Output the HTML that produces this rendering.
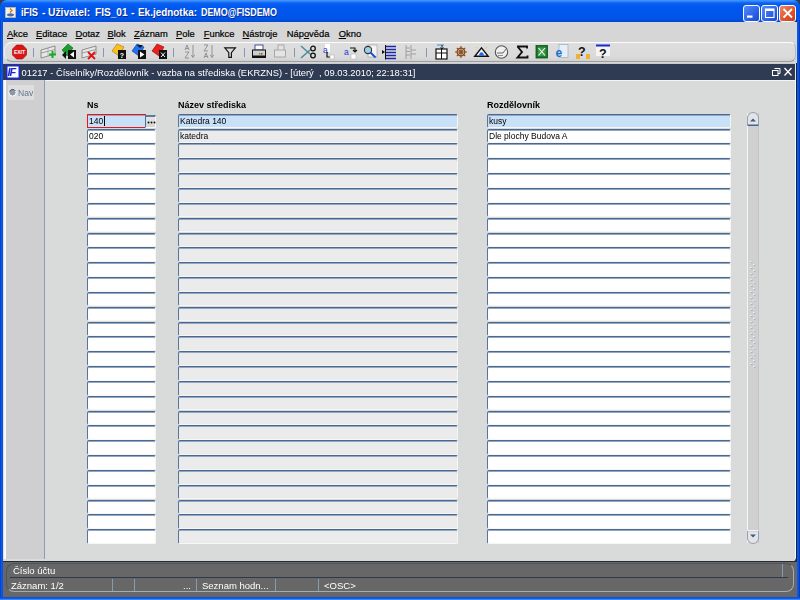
<!DOCTYPE html>
<html><head><meta charset="utf-8">
<style>
*{box-sizing:border-box;margin:0;padding:0}
html,body{width:800px;height:600px;overflow:hidden;background:#2a4058;font-family:"Liberation Sans",sans-serif}
.a{position:absolute}
#title{left:0;top:0;width:800px;height:23px;border-radius:7px 7px 0 0;background:linear-gradient(#4a9cff 0px,#2a80ff 1.5px,#0a62f4 3px,#0058ee 6px,#0056ec 14px,#0054e6 19px,#0048d4 22px,#0040c0 23px)}
.tt{top:6.3px;color:#fff;font-weight:bold;font-size:11.2px;transform-origin:0 0;text-shadow:1px 1px 0 #0a2a8a;white-space:nowrap}
.tb{top:5px;width:17px;height:17px;border:1px solid #fff;border-radius:3px}
#frameL{left:0;top:20px;width:3px;height:580px;background:linear-gradient(90deg,#0038c0,#0a5ae8 1.5px,#0850e0)}
#frameR{left:796px;top:20px;width:4px;height:580px;background:linear-gradient(90deg,#1c2438 0,#1c2438 0.9px,#0a5af0 1.2px,#0a58ec 2.2px,#0030a8 4px)}
#frameB{left:0;top:597px;width:800px;height:3px;background:linear-gradient(#0a50e4,#0a50e4 1.2px,#3a88f0 2.5px)}
#menubar{left:3px;top:22px;width:794px;height:20px;background:#d6d6d6}
.mi u{text-decoration:underline;text-underline-offset:0.8px;text-decoration-thickness:1px}
.mi{top:28.4px;font-size:9.4px;color:#000;-webkit-text-stroke:0.2px #000;white-space:nowrap}
#toolbar{left:3px;top:42px;width:794px;height:21px;background:#d6d6d6}
#tbin{left:4px;top:42px;width:792px;height:20px;border-radius:8px 6px 6px 8px;background:linear-gradient(#dedede 0,#dadada 14px,#cfcfcf 19px);border-top:1px solid #fcfcfc;border-left:1px solid #f0f0f0;border-right:1px solid #b8b8b8;border-bottom:1px solid #9c9c9c}
#mdi{left:3px;top:63px;width:793px;height:17px;background:#2e3b52;border-top:1px solid #c8ccd0;border-right:1px solid #e8e8e8}
#mtext{left:21.5px;top:67px;color:#fff;font-size:9.4px;white-space:nowrap}
#nav{left:3px;top:80px;width:42px;height:479px;background:linear-gradient(90deg,#e0e0e0 0 1px,#fafafa 1px 3px,#cfcfd2 3px);border-right:1px solid #8e9cba}
#main{left:3px;top:80px;width:793px;height:482px;border-right:1px solid #fafafa;border-top:1px solid #f4f4f4;background:#d9dada;border-bottom-right-radius:5px}
#status{left:3px;top:561px;width:794px;height:36px;background:#676767;border-top:1px solid #2a2a2a}
#sin{left:6px;top:563px;width:788px;height:29px;border:1px solid #a4acb4;border-top-color:#4a5666;border-left-color:#4a5666;border-radius:8px}
.st{color:#fff;font-size:9.5px;white-space:nowrap}
.lbl{font-weight:bold;font-size:9px;color:#000;top:99.7px;white-space:nowrap}
.f{height:14.6px;background:#fff;box-shadow:inset 0 1px 0 #93a7c2;border-top:1px solid #4a6890;border-left:1px solid #57759c;border-right:1px solid #f6f6f6;border-bottom:1px solid #f6f6f6;border-radius:2px}
.g{background:#ebebeb}
.b{background:#c8e0f8}
.ft{font-size:8.5px;color:#000;white-space:nowrap;left:1px;top:1.6px;position:absolute}
</style></head><body><div id="wrap" style="position:absolute;left:0;top:0;width:800px;height:600px;overflow:hidden;filter:blur(0.3px)">
<div id="title" class="a"></div>

<div class="a tt" style="left:20.7px;transform:scaleX(0.833)">iFIS</div><div class="a tt" style="left:41.8px;transform:scaleX(0.938)">-</div><div class="a tt" style="left:48.3px;transform:scaleX(0.919)">Uživatel:</div><div class="a tt" style="left:94.7px;transform:scaleX(0.901)">FIS_01</div><div class="a tt" style="left:131px;transform:scaleX(0.938)">-</div><div class="a tt" style="left:138px;transform:scaleX(0.887)">Ek.jednotka:</div><div class="a tt" style="left:201px;transform:scaleX(0.796)">DEMO@FISDEMO</div>



<div id="frameL" class="a"></div><div id="frameR" class="a"></div><div id="frameB" class="a"></div>
<div id="menubar" class="a"></div>
<div class="a mi" style="left:7px"><u>A</u>kce</div>
<div class="a mi" style="left:36px"><u>E</u>ditace</div>
<div class="a mi" style="left:75.5px"><u>D</u>otaz</div>
<div class="a mi" style="left:107.5px"><u>B</u>lok</div>
<div class="a mi" style="left:134px"><u>Z</u>áznam</div>
<div class="a mi" style="left:176px"><u>P</u>ole</div>
<div class="a mi" style="left:203.7px"><u>F</u>unkce</div>
<div class="a mi" style="left:242.5px"><u>N</u>ástroje</div>
<div class="a mi" style="left:286.7px">Náp<u>o</u>věda</div>
<div class="a mi" style="left:338.7px"><u>O</u>kno</div>
<div id="toolbar" class="a"></div>
<div id="tbin" class="a"></div>
<!--tb--><svg class="a" style="left:0;top:41px" width="800" height="22" viewBox="0 0 800 22">
<g>
<polygon points="16.5,4 22.5,4 26.5,8 26.5,14 22.5,18 16.5,18 12.5,14 12.5,8" fill="#d81818" stroke="#a00" stroke-width="0.6"/>
<text x="19.5" y="13.2" font-size="5" font-weight="bold" fill="#fff" text-anchor="middle" font-family="Liberation Sans">EXIT</text>
</g>
<g stroke="#8596b8" stroke-width="1"><line x1="33.5" y1="7" x2="33.5" y2="16"/><line x1="103.5" y1="7" x2="103.5" y2="16"/><line x1="173.5" y1="7" x2="173.5" y2="16"/><line x1="244.5" y1="7" x2="244.5" y2="16"/><line x1="294.5" y1="7" x2="294.5" y2="16"/><line x1="426.5" y1="7" x2="426.5" y2="16"/></g>
<!-- insert -->
<g><polygon points="41,9 55,5 55,13 41,17" fill="#e8e8e8" stroke="#777" stroke-width="0.8"/><line x1="41" y1="12" x2="55" y2="8.5" stroke="#888" stroke-width="0.8"/><line x1="48" y1="7" x2="48" y2="15" stroke="#999" stroke-width="0.6"/>
<path d="M52.5,10 v7 M49,13.5 h7" stroke="#10b020" stroke-width="2"/></g>
<!-- green -->
<g><polygon points="62,9 68,3 73,7 67,15" fill="#18a028" stroke="#063" stroke-width="0.6"/><polygon points="62,14 66,10 66,18" fill="#111"/><rect x="68" y="9" width="8" height="9" fill="#111"/><polygon points="74,10.5 70,13.5 74,16.5" fill="#fff"/></g>
<!-- delete -->
<g><polygon points="82,9 96,5 96,13 82,17" fill="#e8e8e8" stroke="#777" stroke-width="0.8"/><line x1="82" y1="12" x2="96" y2="8.5" stroke="#888" stroke-width="0.8"/>
<path d="M88,11 l7,7 M95,11 l-7,7" stroke="#e01010" stroke-width="1.8"/></g>
<!-- yellow query -->
<g><polygon points="112,10 117,3 124,6 119,15" fill="#f8c020" stroke="#b07000" stroke-width="0.6"/><rect x="118" y="9" width="8" height="9" fill="#111"/><text x="122" y="16.5" font-size="7" font-weight="bold" fill="#fff" text-anchor="middle" font-family="Liberation Sans">?</text></g>
<!-- blue -->
<g><polygon points="132,10 137,3 144,6 139,15" fill="#2070f0" stroke="#0038a0" stroke-width="0.6"/><rect x="138" y="9" width="8" height="9" fill="#111"/><polygon points="140,10.5 144.5,13.5 140,16.5" fill="#fff"/><path d="M137,4 h6 l-3,3z" fill="#111"/></g>
<!-- red -->
<g><polygon points="152,10 157,3 164,6 159,15" fill="#e82020" stroke="#900" stroke-width="0.6"/><rect x="159" y="9" width="8" height="9" fill="#111"/><path d="M161,11.5 l4,4.5 M165,11.5 l-4,4.5" stroke="#fff" stroke-width="1"/></g>
<!-- sort asc -->
<g fill="none" stroke="#8a8a8a" stroke-width="0.9"><path d="M185,9 l2,-5 l2,5 M185.8,7.5 h2.4"/><path d="M185,11 h4 l-4,6 h4"/><path d="M193,4 v12 M191.3,14 l1.7,2.5 l1.7,-2.5"/></g>
<!-- sort desc -->
<g fill="none" stroke="#8a8a8a" stroke-width="0.9"><path d="M204,4 h4 l-4,6 h4"/><path d="M204,17 l2,-5 l2,5 M204.8,15.5 h2.4"/><path d="M212,4 v12 M210.3,14 l1.7,2.5 l1.7,-2.5"/></g>
<!-- funnel -->
<path d="M224.8,6.8 h10.6 l-4,4.8 v4.8 h-2.6 v-4.8 z" fill="none" stroke="#111" stroke-width="1.15"/>
<!-- printer -->
<g><rect x="255" y="4" width="8" height="5" fill="#fff" stroke="#1a2a90" stroke-width="0.8"/><rect x="252.5" y="9" width="13" height="6" fill="#cfcfcf" stroke="#111" stroke-width="1"/><rect x="252" y="15" width="14" height="2" fill="#111"/><rect x="259" y="12" width="1.5" height="1.5" fill="#2c2"/><rect x="261" y="12" width="1.5" height="1.5" fill="#e22"/></g>
<!-- print setup gray -->
<g fill="#e4e4e4" stroke="#999" stroke-width="0.8"><rect x="278" y="4" width="6" height="6"/><rect x="274.5" y="9" width="11" height="7"/></g>
<!-- scissors -->
<g><path d="M301,5 l9,8 M301,17 l9,-8" stroke="#4a8a9a" stroke-width="1.5"/><circle cx="313" cy="7.5" r="2.3" fill="none" stroke="#111" stroke-width="1.3"/><circle cx="313" cy="14.5" r="2.3" fill="none" stroke="#111" stroke-width="1.3"/></g>
<!-- copy -->
<g><rect x="325" y="3" width="5" height="8" fill="#fff"/><text x="323" y="11.5" font-size="8.5" fill="#1a3ad8" font-family="Liberation Sans">a</text><path d="M327,11 v5 h5" fill="none" stroke="#111" stroke-width="1.2"/><rect x="330" y="14" width="4" height="4" fill="#fff" stroke="#aaa" stroke-width="0.5"/></g>
<!-- paste -->
<g><text x="344" y="14" font-size="8.5" fill="#1a3ad8" font-family="Liberation Sans">a</text><path d="M350,7 h5 v4 M353,9 l2,2 l2,-2" fill="none" stroke="#111" stroke-width="1.1"/><rect x="351" y="13" width="5" height="5" fill="#fff" stroke="#aaa" stroke-width="0.5"/></g>
<!-- search -->
<g><rect x="368" y="4" width="9" height="12" fill="#f4f4f4" stroke="#999" stroke-width="0.6"/><circle cx="368" cy="9" r="3.6" fill="#9cd0e8" stroke="#333" stroke-width="1.1"/><path d="M370.5,11.5 l5,5" stroke="#1a50d0" stroke-width="2"/></g>
<!-- list -->
<g><polygon points="382,9 385,11 382,13" fill="#111"/><path d="M386,5.5 h10 M386,8.5 h10 M386,11.5 h10 M386,14.5 h10 M386,17.5 h10" stroke="#1a2aa8" stroke-width="1.3"/><line x1="385.5" y1="4" x2="385.5" y2="18.5" stroke="#111" stroke-width="1"/></g>
<!-- gray list -->
<g stroke="#9a9a9a" stroke-width="0.9" fill="none"><path d="M406,4 v14 M411,4 v14 M406,7 h4 M406,10.5 h4 M406,14 h4 M411,9 h5 M411,13 h5"/></g>
<!-- table icon -->
<g><rect x="436" y="8" width="11" height="10" fill="#fff" stroke="#111" stroke-width="1.2"/><path d="M436,12 h11 M441.5,8 v10" stroke="#111" stroke-width="1"/><path d="M437,4 h7" stroke="#4aa0e0" stroke-width="1.2"/><path d="M442,4 v4 l-1.5,-1.5 M442,8 l1.5,-1.5" stroke="#111" stroke-width="0.9" fill="none"/></g>
<!-- wheel -->
<g stroke="#8a4a18" fill="none"><circle cx="461" cy="11" r="3.8" stroke-width="1.3"/><circle cx="461" cy="11" r="1" fill="#8a4a18" stroke-width="0"/><path d="M455,11 h12 M461,5 v12 M456.8,6.8 l8.4,8.4 M465.2,6.8 l-8.4,8.4" stroke-width="1.1"/></g>
<!-- triangle eye -->
<g><path d="M476,6 l1.5,1.5 M487,6 l-1.5,1.5" stroke="#e8d020" stroke-width="1"/><polygon points="474.8,15.3 481.5,6.8 488.2,15.3" fill="#f4f4f4" stroke="#111" stroke-width="1.4"/><path d="M479,14.6 a2.5,2.5 0 0 1 5,0 z" fill="#1a6ae8"/><circle cx="481.5" cy="13" r="1.8" fill="#1a6ae8"/></g>
<!-- gauge -->
<g><circle cx="501.5" cy="11" r="6.2" fill="#f0f0f0" stroke="#555" stroke-width="1.1"/><path d="M497,12 h6 l3,-4" stroke="#555" stroke-width="0.9" fill="none"/><path d="M498,14.5 h5" stroke="#777" stroke-width="0.8"/></g>
<!-- sigma -->
<path d="M517,5.5 h10 v2 M517.5,5.5 l4.5,5.5 l-4.5,5.5 h10 v-2" fill="none" stroke="#111" stroke-width="1.9"/>
<!-- excel -->
<g><rect x="536" y="4.5" width="11.5" height="12.5" fill="#1c7a2a" stroke="#0c4a1a" stroke-width="0.8"/><rect x="538" y="6.5" width="7.5" height="8.5" fill="#3a9a48"/><path d="M538.5,7 l6.5,7.5 M545,7 l-6.5,7.5" stroke="#fff" stroke-width="1.1"/></g>
<!-- IE -->
<g><rect x="559" y="3.5" width="9" height="13" fill="#e8eef8" stroke="#8aa" stroke-width="0.6"/><text x="555.5" y="15.5" font-size="12" font-weight="bold" fill="#1a70d8" font-family="Liberation Sans">e</text></g>
<!-- help yellow -->
<g><rect x="576" y="13" width="4" height="5" fill="#f0b030"/><rect x="586" y="13" width="4" height="5" fill="#f0b030"/><text x="578" y="15" font-size="12.5" font-weight="bold" fill="#111" font-family="Liberation Sans">?</text></g>
<!-- help blue -->
<g><rect x="596" y="5" width="14" height="10" fill="#f4f4f4"/><rect x="596" y="3.5" width="14" height="2" fill="#1a2ad0"/><text x="599" y="16.5" font-size="12.5" font-weight="bold" fill="#111" font-family="Liberation Sans">?</text></g>
</svg>
<!--/tb-->
<div id="mdi" class="a"></div>

<div id="mtext" class="a">01217 - Číselníky/Rozdělovník - vazba na střediska (EKRZNS) - [úterý&nbsp; , 09.03.2010; 22:18:31]</div>
<div id="main" class="a"></div>
<div id="nav" class="a"></div>
<div id="status" class="a"></div>
<div id="sin" class="a"></div>
<div class="a st" style="left:13px;top:565px">Číslo účtu</div>
<div class="a" style="left:10px;top:577px;width:778px;height:1px;background:#2c3a4e"></div>
<div class="a st" style="left:11px;top:580px">Záznam: 1/2</div>
<div class="a st" style="left:202px;top:580px">Seznam hodn...</div>
<div class="a st" style="left:324px;top:580px">&lt;OSC&gt;</div>
<div class="a st" style="left:183px;top:580px">...</div>
<div class="a lbl" style="left:87px">Ns</div>
<div class="a lbl" style="left:178px">Název střediska</div>
<div class="a lbl" style="left:487px">Rozdělovník</div>
<div id="rows"><div class="a f sel" style="left:87px;top:113.80px;width:58.5px;height:14.6px;border:1px solid #e41818;border-right:none;border-radius:1px 0 0 1px;background:#c8e0f8"><span class="ft">140</span><span style="position:absolute;left:15.5px;top:1px;width:1px;height:10px;background:#000"></span></div><div class="a" style="left:145px;top:114.60px;width:11px;height:13.80px;background:linear-gradient(#e4e4e4,#d6d6d6);border-top:2px solid #5c7aa0;border-left:1px solid #4d6b93;border-right:1px solid #f8f8f8;border-bottom:1px solid #f8f8f8"><svg style="position:absolute;left:1px;top:3px" width="9" height="5" viewBox="0 0 9 5"><circle cx="1.5" cy="2.5" r="1" fill="#111"/><circle cx="4.5" cy="2.5" r="1" fill="#111"/><circle cx="7.5" cy="2.5" r="1" fill="#111"/></svg></div><div class="a f b" style="left:178px;top:113.80px;width:280px;height:14.6px"><span class="ft">Katedra 140</span></div><div class="a f b" style="left:487px;top:113.80px;width:244px;height:14.6px"><span class="ft">kusy</span></div><div class="a f" style="left:87px;top:128.64px;width:69px;height:14.6px"><span class="ft">020</span></div><div class="a f g" style="left:178px;top:128.64px;width:280px;height:14.6px"><span class="ft">katedra</span></div><div class="a f" style="left:487px;top:128.64px;width:244px;height:14.6px"><span class="ft">Dle plochy Budova A</span></div><div class="a f" style="left:87px;top:143.48px;width:69px;height:14.6px"></div><div class="a f g" style="left:178px;top:143.48px;width:280px;height:14.6px"></div><div class="a f" style="left:487px;top:143.48px;width:244px;height:14.6px"></div><div class="a f" style="left:87px;top:158.32px;width:69px;height:14.6px"></div><div class="a f g" style="left:178px;top:158.32px;width:280px;height:14.6px"></div><div class="a f" style="left:487px;top:158.32px;width:244px;height:14.6px"></div><div class="a f" style="left:87px;top:173.16px;width:69px;height:14.6px"></div><div class="a f g" style="left:178px;top:173.16px;width:280px;height:14.6px"></div><div class="a f" style="left:487px;top:173.16px;width:244px;height:14.6px"></div><div class="a f" style="left:87px;top:188.00px;width:69px;height:14.6px"></div><div class="a f g" style="left:178px;top:188.00px;width:280px;height:14.6px"></div><div class="a f" style="left:487px;top:188.00px;width:244px;height:14.6px"></div><div class="a f" style="left:87px;top:202.84px;width:69px;height:14.6px"></div><div class="a f g" style="left:178px;top:202.84px;width:280px;height:14.6px"></div><div class="a f" style="left:487px;top:202.84px;width:244px;height:14.6px"></div><div class="a f" style="left:87px;top:217.68px;width:69px;height:14.6px"></div><div class="a f g" style="left:178px;top:217.68px;width:280px;height:14.6px"></div><div class="a f" style="left:487px;top:217.68px;width:244px;height:14.6px"></div><div class="a f" style="left:87px;top:232.52px;width:69px;height:14.6px"></div><div class="a f g" style="left:178px;top:232.52px;width:280px;height:14.6px"></div><div class="a f" style="left:487px;top:232.52px;width:244px;height:14.6px"></div><div class="a f" style="left:87px;top:247.36px;width:69px;height:14.6px"></div><div class="a f g" style="left:178px;top:247.36px;width:280px;height:14.6px"></div><div class="a f" style="left:487px;top:247.36px;width:244px;height:14.6px"></div><div class="a f" style="left:87px;top:262.20px;width:69px;height:14.6px"></div><div class="a f g" style="left:178px;top:262.20px;width:280px;height:14.6px"></div><div class="a f" style="left:487px;top:262.20px;width:244px;height:14.6px"></div><div class="a f" style="left:87px;top:277.04px;width:69px;height:14.6px"></div><div class="a f g" style="left:178px;top:277.04px;width:280px;height:14.6px"></div><div class="a f" style="left:487px;top:277.04px;width:244px;height:14.6px"></div><div class="a f" style="left:87px;top:291.88px;width:69px;height:14.6px"></div><div class="a f g" style="left:178px;top:291.88px;width:280px;height:14.6px"></div><div class="a f" style="left:487px;top:291.88px;width:244px;height:14.6px"></div><div class="a f" style="left:87px;top:306.72px;width:69px;height:14.6px"></div><div class="a f g" style="left:178px;top:306.72px;width:280px;height:14.6px"></div><div class="a f" style="left:487px;top:306.72px;width:244px;height:14.6px"></div><div class="a f" style="left:87px;top:321.56px;width:69px;height:14.6px"></div><div class="a f g" style="left:178px;top:321.56px;width:280px;height:14.6px"></div><div class="a f" style="left:487px;top:321.56px;width:244px;height:14.6px"></div><div class="a f" style="left:87px;top:336.40px;width:69px;height:14.6px"></div><div class="a f g" style="left:178px;top:336.40px;width:280px;height:14.6px"></div><div class="a f" style="left:487px;top:336.40px;width:244px;height:14.6px"></div><div class="a f" style="left:87px;top:351.24px;width:69px;height:14.6px"></div><div class="a f g" style="left:178px;top:351.24px;width:280px;height:14.6px"></div><div class="a f" style="left:487px;top:351.24px;width:244px;height:14.6px"></div><div class="a f" style="left:87px;top:366.08px;width:69px;height:14.6px"></div><div class="a f g" style="left:178px;top:366.08px;width:280px;height:14.6px"></div><div class="a f" style="left:487px;top:366.08px;width:244px;height:14.6px"></div><div class="a f" style="left:87px;top:380.92px;width:69px;height:14.6px"></div><div class="a f g" style="left:178px;top:380.92px;width:280px;height:14.6px"></div><div class="a f" style="left:487px;top:380.92px;width:244px;height:14.6px"></div><div class="a f" style="left:87px;top:395.76px;width:69px;height:14.6px"></div><div class="a f g" style="left:178px;top:395.76px;width:280px;height:14.6px"></div><div class="a f" style="left:487px;top:395.76px;width:244px;height:14.6px"></div><div class="a f" style="left:87px;top:410.60px;width:69px;height:14.6px"></div><div class="a f g" style="left:178px;top:410.60px;width:280px;height:14.6px"></div><div class="a f" style="left:487px;top:410.60px;width:244px;height:14.6px"></div><div class="a f" style="left:87px;top:425.44px;width:69px;height:14.6px"></div><div class="a f g" style="left:178px;top:425.44px;width:280px;height:14.6px"></div><div class="a f" style="left:487px;top:425.44px;width:244px;height:14.6px"></div><div class="a f" style="left:87px;top:440.28px;width:69px;height:14.6px"></div><div class="a f g" style="left:178px;top:440.28px;width:280px;height:14.6px"></div><div class="a f" style="left:487px;top:440.28px;width:244px;height:14.6px"></div><div class="a f" style="left:87px;top:455.12px;width:69px;height:14.6px"></div><div class="a f g" style="left:178px;top:455.12px;width:280px;height:14.6px"></div><div class="a f" style="left:487px;top:455.12px;width:244px;height:14.6px"></div><div class="a f" style="left:87px;top:469.96px;width:69px;height:14.6px"></div><div class="a f g" style="left:178px;top:469.96px;width:280px;height:14.6px"></div><div class="a f" style="left:487px;top:469.96px;width:244px;height:14.6px"></div><div class="a f" style="left:87px;top:484.80px;width:69px;height:14.6px"></div><div class="a f g" style="left:178px;top:484.80px;width:280px;height:14.6px"></div><div class="a f" style="left:487px;top:484.80px;width:244px;height:14.6px"></div><div class="a f" style="left:87px;top:499.64px;width:69px;height:14.6px"></div><div class="a f g" style="left:178px;top:499.64px;width:280px;height:14.6px"></div><div class="a f" style="left:487px;top:499.64px;width:244px;height:14.6px"></div><div class="a f" style="left:87px;top:514.48px;width:69px;height:14.6px"></div><div class="a f g" style="left:178px;top:514.48px;width:280px;height:14.6px"></div><div class="a f" style="left:487px;top:514.48px;width:244px;height:14.6px"></div><div class="a f" style="left:87px;top:529.32px;width:69px;height:14.6px"></div><div class="a f g" style="left:178px;top:529.32px;width:280px;height:14.6px"></div><div class="a f" style="left:487px;top:529.32px;width:244px;height:14.6px"></div></div><!--rows-->
<!--extra-->
<svg class="a" style="left:743px;top:5px" width="54" height="17" viewBox="0 0 54 17">
<defs><linearGradient id="bb" x1="0" y1="0" x2="1" y2="1"><stop offset="0" stop-color="#5a8cf8"/><stop offset="0.6" stop-color="#2a62e8"/><stop offset="1" stop-color="#1a48c8"/></linearGradient>
<linearGradient id="rb" x1="0" y1="0" x2="1" y2="1"><stop offset="0" stop-color="#f08a6a"/><stop offset="0.6" stop-color="#e0502a"/><stop offset="1" stop-color="#c83a18"/></linearGradient></defs>
<rect x="0.5" y="0.5" width="16" height="16" rx="2.5" fill="url(#bb)" stroke="#fff" stroke-width="1"/>
<rect x="18.5" y="0.5" width="16" height="16" rx="2.5" fill="url(#bb)" stroke="#fff" stroke-width="1"/>
<rect x="36.5" y="0.5" width="16" height="16" rx="2.5" fill="url(#rb)" stroke="#fff" stroke-width="1"/>
<rect x="4" y="10.5" width="5.5" height="2.2" fill="#fff"/>
<rect x="22.5" y="4" width="8.5" height="8.5" fill="none" stroke="#fff" stroke-width="1.1"/><rect x="22.5" y="4" width="8.5" height="2" fill="#fff"/>
<path d="M40.5,4 l8.5,8.5 M49,4 l-8.5,8.5" stroke="#fff" stroke-width="1.8"/>
</svg>
<svg class="a" style="left:5px;top:7px" width="11" height="11" viewBox="0 0 11 11">
<rect x="0.5" y="0.5" width="10" height="10" fill="#f4f0e4" stroke="#c0b8a8" stroke-width="0.8"/>
<path d="M5,1.5 l2,2 l-2,2" stroke="#e07010" stroke-width="1.2" fill="none"/>
<ellipse cx="5.5" cy="7.8" rx="3.5" ry="1.6" fill="#4a6ab0"/>
</svg>
<svg class="a" style="left:6px;top:65px" width="14" height="14" viewBox="0 0 14 14">
<rect x="0.75" y="0.75" width="12.5" height="12.5" fill="#fff" stroke="#1a28d8" stroke-width="1.5"/>
<text x="1.6" y="11.3" font-size="11" font-weight="bold" font-style="italic" fill="#1a28c8" font-family="Liberation Sans" letter-spacing="-1.2">IF</text>
</svg>
<svg class="a" style="left:770px;top:66px" width="24" height="12" viewBox="0 0 24 12">
<rect x="2.5" y="4.5" width="5.5" height="5" fill="none" stroke="#fff" stroke-width="1"/><path d="M4.5,2.5 h5.5 v5 h-2" fill="none" stroke="#fff" stroke-width="1"/>
<path d="M14.5,2 l7,7.5 M21.5,2 l-7,7.5" stroke="#fff" stroke-width="1.3"/>
</svg>
<div class="a" style="left:8px;top:85px;width:26px;height:15px;background:#dedede"></div>
<svg class="a" style="left:8px;top:88px" width="9" height="9" viewBox="0 0 9 9"><circle cx="4.5" cy="4.5" r="3.6" fill="#8a98a8" stroke="#fff" stroke-width="1"/><path d="M1.5,3.5 a3.3,3.3 0 0 1 6,-0.5" stroke="#444" stroke-width="0.9" fill="none"/></svg>
<div class="a" style="left:18px;top:87.5px;font-size:8.6px;color:#63788f;white-space:nowrap">Nav</div>
<div class="a" style="left:747px;top:113px;width:12px;height:430px;background:#d0d0d0;border-left:1px solid #f4f4f4;border-right:1px solid #c4c4c4"></div>
<svg class="a" style="left:746px;top:112px" width="14" height="432" viewBox="0 0 14 432">
<path d="M1.5,13 v-7 a5.5,5.5 0 0 1 11,0 v7 z" fill="#e4e4e4" stroke="#8a9ab8" stroke-width="0.9"/><line x1="1.5" y1="13.3" x2="12.5" y2="13.3" stroke="#3a5a88" stroke-width="1.2"/>
<polygon points="4,9.5 7,6.5 10,9.5" fill="#3a5a88"/>
<path d="M1.5,419 v7 a5.5,5.5 0 0 0 11,0 v-7 z" fill="#e4e4e4" stroke="#8a9ab8" stroke-width="0.9"/><line x1="1.5" y1="418.7" x2="12.5" y2="418.7" stroke="#f8f8f8" stroke-width="1.2"/>
<polygon points="4,422.5 7,425.5 10,422.5" fill="#3a5a88"/>
</svg>
<svg class="a" style="left:750px;top:260px" width="7" height="112" viewBox="0 0 7 112"><rect x="1" y="1.6" width="1.3" height="1.3" fill="#8a9ac0"/><rect x="0.4" y="1.0" width="1.2" height="1.2" fill="#fff"/><rect x="4" y="4.6" width="1.3" height="1.3" fill="#8a9ac0"/><rect x="3.4" y="4.0" width="1.2" height="1.2" fill="#fff"/><rect x="1" y="7.6" width="1.3" height="1.3" fill="#8a9ac0"/><rect x="0.4" y="7.0" width="1.2" height="1.2" fill="#fff"/><rect x="4" y="10.6" width="1.3" height="1.3" fill="#8a9ac0"/><rect x="3.4" y="10.0" width="1.2" height="1.2" fill="#fff"/><rect x="1" y="13.6" width="1.3" height="1.3" fill="#8a9ac0"/><rect x="0.4" y="13.0" width="1.2" height="1.2" fill="#fff"/><rect x="4" y="16.6" width="1.3" height="1.3" fill="#8a9ac0"/><rect x="3.4" y="16.0" width="1.2" height="1.2" fill="#fff"/><rect x="1" y="19.6" width="1.3" height="1.3" fill="#8a9ac0"/><rect x="0.4" y="19.0" width="1.2" height="1.2" fill="#fff"/><rect x="4" y="22.6" width="1.3" height="1.3" fill="#8a9ac0"/><rect x="3.4" y="22.0" width="1.2" height="1.2" fill="#fff"/><rect x="1" y="25.6" width="1.3" height="1.3" fill="#8a9ac0"/><rect x="0.4" y="25.0" width="1.2" height="1.2" fill="#fff"/><rect x="4" y="28.6" width="1.3" height="1.3" fill="#8a9ac0"/><rect x="3.4" y="28.0" width="1.2" height="1.2" fill="#fff"/><rect x="1" y="31.6" width="1.3" height="1.3" fill="#8a9ac0"/><rect x="0.4" y="31.0" width="1.2" height="1.2" fill="#fff"/><rect x="4" y="34.6" width="1.3" height="1.3" fill="#8a9ac0"/><rect x="3.4" y="34.0" width="1.2" height="1.2" fill="#fff"/><rect x="1" y="37.6" width="1.3" height="1.3" fill="#8a9ac0"/><rect x="0.4" y="37.0" width="1.2" height="1.2" fill="#fff"/><rect x="4" y="40.6" width="1.3" height="1.3" fill="#8a9ac0"/><rect x="3.4" y="40.0" width="1.2" height="1.2" fill="#fff"/><rect x="1" y="43.6" width="1.3" height="1.3" fill="#8a9ac0"/><rect x="0.4" y="43.0" width="1.2" height="1.2" fill="#fff"/><rect x="4" y="46.6" width="1.3" height="1.3" fill="#8a9ac0"/><rect x="3.4" y="46.0" width="1.2" height="1.2" fill="#fff"/><rect x="1" y="49.6" width="1.3" height="1.3" fill="#8a9ac0"/><rect x="0.4" y="49.0" width="1.2" height="1.2" fill="#fff"/><rect x="4" y="52.6" width="1.3" height="1.3" fill="#8a9ac0"/><rect x="3.4" y="52.0" width="1.2" height="1.2" fill="#fff"/><rect x="1" y="55.6" width="1.3" height="1.3" fill="#8a9ac0"/><rect x="0.4" y="55.0" width="1.2" height="1.2" fill="#fff"/><rect x="4" y="58.6" width="1.3" height="1.3" fill="#8a9ac0"/><rect x="3.4" y="58.0" width="1.2" height="1.2" fill="#fff"/><rect x="1" y="61.6" width="1.3" height="1.3" fill="#8a9ac0"/><rect x="0.4" y="61.0" width="1.2" height="1.2" fill="#fff"/><rect x="4" y="64.6" width="1.3" height="1.3" fill="#8a9ac0"/><rect x="3.4" y="64.0" width="1.2" height="1.2" fill="#fff"/><rect x="1" y="67.6" width="1.3" height="1.3" fill="#8a9ac0"/><rect x="0.4" y="67.0" width="1.2" height="1.2" fill="#fff"/><rect x="4" y="70.6" width="1.3" height="1.3" fill="#8a9ac0"/><rect x="3.4" y="70.0" width="1.2" height="1.2" fill="#fff"/><rect x="1" y="73.6" width="1.3" height="1.3" fill="#8a9ac0"/><rect x="0.4" y="73.0" width="1.2" height="1.2" fill="#fff"/><rect x="4" y="76.6" width="1.3" height="1.3" fill="#8a9ac0"/><rect x="3.4" y="76.0" width="1.2" height="1.2" fill="#fff"/><rect x="1" y="79.6" width="1.3" height="1.3" fill="#8a9ac0"/><rect x="0.4" y="79.0" width="1.2" height="1.2" fill="#fff"/><rect x="4" y="82.6" width="1.3" height="1.3" fill="#8a9ac0"/><rect x="3.4" y="82.0" width="1.2" height="1.2" fill="#fff"/><rect x="1" y="85.6" width="1.3" height="1.3" fill="#8a9ac0"/><rect x="0.4" y="85.0" width="1.2" height="1.2" fill="#fff"/><rect x="4" y="88.6" width="1.3" height="1.3" fill="#8a9ac0"/><rect x="3.4" y="88.0" width="1.2" height="1.2" fill="#fff"/><rect x="1" y="91.6" width="1.3" height="1.3" fill="#8a9ac0"/><rect x="0.4" y="91.0" width="1.2" height="1.2" fill="#fff"/><rect x="4" y="94.6" width="1.3" height="1.3" fill="#8a9ac0"/><rect x="3.4" y="94.0" width="1.2" height="1.2" fill="#fff"/><rect x="1" y="97.6" width="1.3" height="1.3" fill="#8a9ac0"/><rect x="0.4" y="97.0" width="1.2" height="1.2" fill="#fff"/><rect x="4" y="100.6" width="1.3" height="1.3" fill="#8a9ac0"/><rect x="3.4" y="100.0" width="1.2" height="1.2" fill="#fff"/><rect x="1" y="103.6" width="1.3" height="1.3" fill="#8a9ac0"/><rect x="0.4" y="103.0" width="1.2" height="1.2" fill="#fff"/><rect x="4" y="106.6" width="1.3" height="1.3" fill="#8a9ac0"/><rect x="3.4" y="106.0" width="1.2" height="1.2" fill="#fff"/></svg>
<div class="a" style="left:112px;top:579px;width:1px;height:12px;background:#8a9ab0"></div>
<div class="a" style="left:134px;top:579px;width:1px;height:12px;background:#8a9ab0"></div>
<div class="a" style="left:196px;top:579px;width:1px;height:12px;background:#8a9ab0"></div>
<div class="a" style="left:275px;top:579px;width:1px;height:12px;background:#8a9ab0"></div>
<div class="a" style="left:318px;top:579px;width:1px;height:12px;background:#8a9ab0"></div>
<div class="a" style="left:782px;top:564px;width:1px;height:13px;background:#8a9ab0"></div>
<!--/extra-->
</div></body></html>
